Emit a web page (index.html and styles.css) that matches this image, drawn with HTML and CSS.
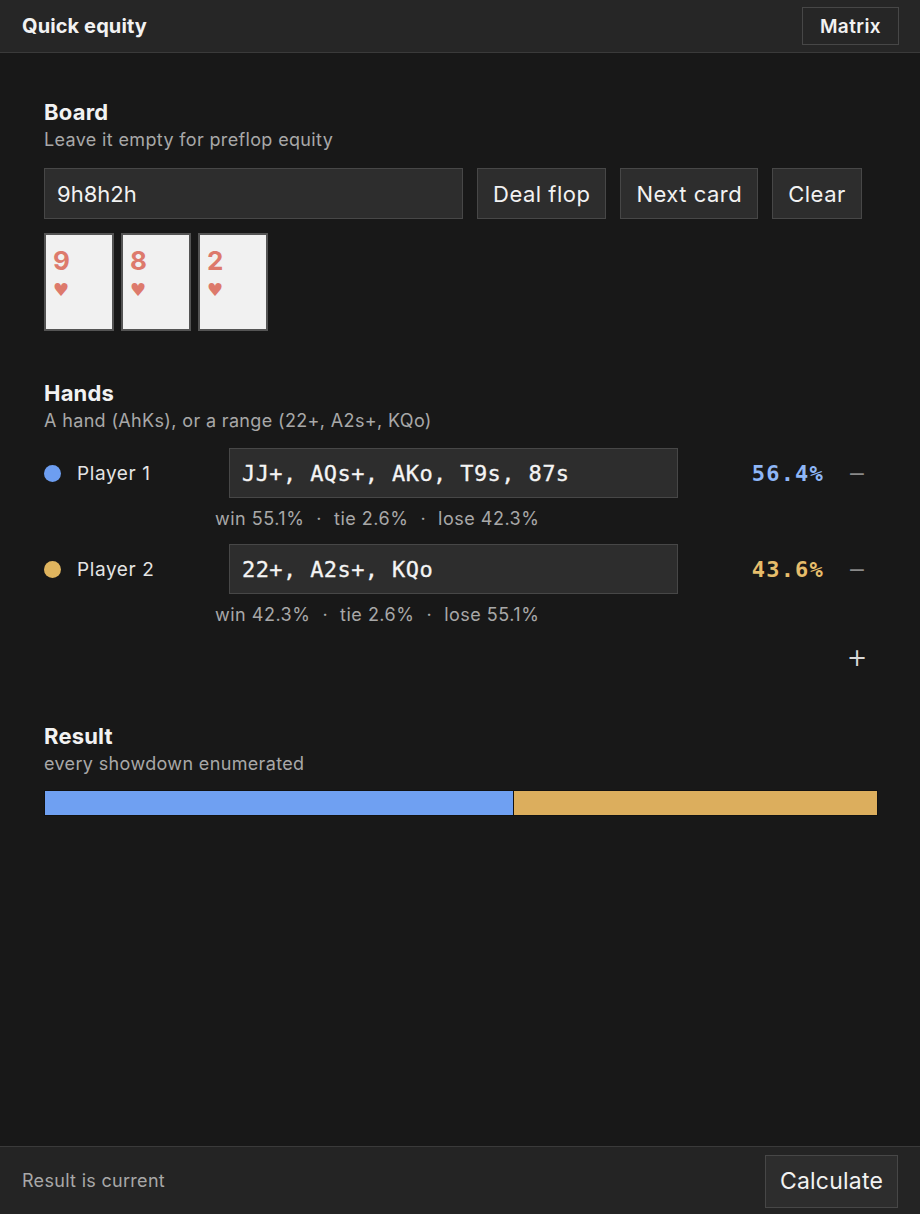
FILE: index.html
```html
<!DOCTYPE html>
<html lang="en">
<head>
  <meta charset="UTF-8" />
  <meta name="viewport" content="width=device-width, initial-scale=1.0"/>
  <title>Quick equity</title>
  <link rel="stylesheet" href="styles.css">
</head>
<body>

<header class="topbar">
  <h1>Quick equity</h1>
  <button class="btn btn-small">Matrix</button>
</header>

<main>
  <section class="block">
    <h2>Board</h2>
    <p class="hint">Leave it empty for preflop equity</p>
    <div class="board-row">
      <input class="board-input" type="text" value="9h8h2h" />
      <button class="btn">Deal flop</button>
      <button class="btn">Next card</button>
      <button class="btn">Clear</button>
    </div>
    <div class="cards">
      <div class="card"><span class="rank">9</span><span class="suit">&#9829;</span></div>
      <div class="card"><span class="rank">8</span><span class="suit">&#9829;</span></div>
      <div class="card"><span class="rank">2</span><span class="suit">&#9829;</span></div>
    </div>
  </section>

  <section class="block hands">
    <h2>Hands</h2>
    <p class="hint">A hand (AhKs), or a range (22+, A2s+, KQo)</p>

    <div class="player">
      <div class="player-name"><span class="dot p1"></span>Player 1</div>
      <input class="range-input" type="text" value="JJ+, AQs+, AKo, T9s, 87s" />
      <div class="pct p1">56.4%</div>
      <button class="icon-btn" title="Remove">&minus;</button>
      <div class="stats"><span>win 55.1%</span><span>&middot;</span><span>tie 2.6%</span><span>&middot;</span><span>lose 42.3%</span></div>
    </div>

    <div class="player">
      <div class="player-name"><span class="dot p2"></span>Player 2</div>
      <input class="range-input" type="text" value="22+, A2s+, KQo" />
      <div class="pct p2">43.6%</div>
      <button class="icon-btn" title="Remove">&minus;</button>
      <div class="stats"><span>win 42.3%</span><span>&middot;</span><span>tie 2.6%</span><span>&middot;</span><span>lose 55.1%</span></div>
    </div>

    <div class="add-row">
      <button class="icon-btn add" title="Add player">+</button>
    </div>
  </section>

  <section class="block result">
    <h2>Result</h2>
    <p class="hint">every showdown enumerated</p>
    <div class="bar">
      <div class="seg p1" style="width: 56.4%"></div>
      <div class="seg p2" style="width: 43.6%"></div>
    </div>
  </section>
</main>

<footer class="status">
  <span>Result is current</span>
  <button class="btn btn-calc">Calculate</button>
</footer>

</body>
</html>
```

FILE: styles.css
```css
* {
  box-sizing: border-box;
}

body {
  margin: 0;
  font-family: Inter, "Noto Sans", sans-serif;
  background-color: #181818;
  color: #f2f2f2;
  display: flex;
  flex-direction: column;
  height: 100vh;
}

/* barre du haut */
.topbar {
  height: 53px;
  background: #262626;
  border-bottom: 1px solid #3a3a3a;
  display: flex;
  justify-content: space-between;
  align-items: center;
  padding: 0 22px;
}

.topbar h1 {
  margin: 0;
  font-size: 20px;
  font-weight: 700;
  letter-spacing: 0.1px;
}

.btn {
  background: #2d2d2d;
  color: #f2f2f2;
  border: 1px solid #474747;
  border-radius: 0;
  font-family: inherit;
  font-size: 22px;
  letter-spacing: 0.5px;
  height: 51px;
  padding: 0 15px;
  cursor: pointer;
}

.btn:hover {
  background: #363636;
}

.btn-small {
  height: 38px;
  font-size: 19px;
  font-weight: 600;
  letter-spacing: 0.4px;
  padding: 0 17px;
  background: #262626;
  margin-right: -1px;
}

main {
  flex: 1;
  padding: 44px 42px 0 44px;
}

.block h2 {
  margin: 0;
  font-size: 22px;
  font-weight: 700;
  line-height: 30px;
  letter-spacing: 0.2px;
}

.hint {
  margin: 2px 0 0;
  font-size: 18px;
  letter-spacing: 0.35px;
  line-height: 22px;
  color: #a8a8a8;
}

.board-row {
  display: flex;
  gap: 14px;
  margin-top: 17px;
}

.board-input {
  width: 419px;
  height: 51px;
  background: #2d2d2d;
  border: 1px solid #474747;
  color: #f2f2f2;
  font-family: inherit;
  font-size: 22px;
  padding: 0 12px;
}

.cards {
  display: flex;
  gap: 7px;
  margin-top: 14px;
}

.card {
  width: 70px;
  height: 98px;
  background: #f1f1f1;
  border: 2px solid #545454;
  display: flex;
  flex-direction: column;
  padding: 11px 0 0 7px;
  color: #dd7a6c;
}

.rank {
  font-size: 26px;
  font-weight: 700;
  line-height: 30px;
}

.suit {
  font-family: "DejaVu Sans", sans-serif;
  font-size: 18px;
  line-height: 22px;
  margin-top: 3px;
}

.hands {
  margin-top: 47px;
}

/* une ligne par joueur */
.player {
  display: grid;
  grid-template-columns: 185px 449px 146px 54px;
  align-items: center;
  margin-top: 16px;
}

.player + .player {
  margin-top: 15px;
}

.player-name {
  display: flex;
  align-items: center;
  font-size: 19px;
  letter-spacing: 0.6px;
  color: #e4e4e4;
}

.dot {
  width: 17px;
  height: 17px;
  border-radius: 50%;
  margin: 0 16px 0 0;
}

.dot.p1 { background: #6d9ef1; }
.dot.p2 { background: #dfb45e; }

.range-input {
  height: 50px;
  background: #2d2d2d;
  border: 1px solid #474747;
  color: #f4f4f4;
  font-family: "DejaVu Sans Mono", monospace;
  font-size: 22px;
  letter-spacing: 0.4px;
  padding: 0 12px;
  -webkit-text-stroke: 0.3px #f4f4f4;
}

.pct {
  text-align: right;
  font-family: "DejaVu Sans Mono", monospace;
  font-weight: 700;
  font-size: 22px;
  letter-spacing: 1.2px;
}

.pct.p1 { color: #8eb6f6; }
.pct.p2 { color: #e6bd6b; }

.icon-btn {
  justify-self: end;
  width: 28px;
  height: 28px;
  margin-right: 7px;
  background: none;
  border: none;
  color: #8a8a8a;
  font-family: "DejaVu Sans", sans-serif;
  font-size: 22px;
  padding: 0;
  cursor: pointer;
}

.stats {
  grid-column: 1 / -1;
  display: flex;
  gap: 12px;
  padding-left: 171px;
  margin-top: 10px;
  font-size: 18px;
  line-height: 21px;
  letter-spacing: 0.5px;
  color: #a8a8a8;
}

.add-row {
  display: flex;
  justify-content: flex-end;
  margin-top: 19px;
}

.icon-btn.add {
  color: #d8d8d8;
  font-size: 24px;
}

.result {
  margin-top: 49px;
}

.bar {
  display: flex;
  height: 26px;
  margin-top: 15px;
  background: #111;
  border: 1px solid #111;
}

.seg.p1 {
  background: #6fa0f2;
  border-right: 1px solid #111;
}

.seg.p2 {
  background: #dcae5d;
}

/* pied de page */
.status {
  height: 68px;
  background: #242424;
  border-top: 1px solid #3a3a3a;
  display: flex;
  justify-content: space-between;
  align-items: center;
  padding: 0 22px;
  font-size: 18px;
  letter-spacing: 0.3px;
  color: #a8a8a8;
}

.btn-calc {
  height: 53px;
  font-size: 23px;
  letter-spacing: 0.2px;
  padding: 0 14px;
  margin-top: 1px;
}
```
